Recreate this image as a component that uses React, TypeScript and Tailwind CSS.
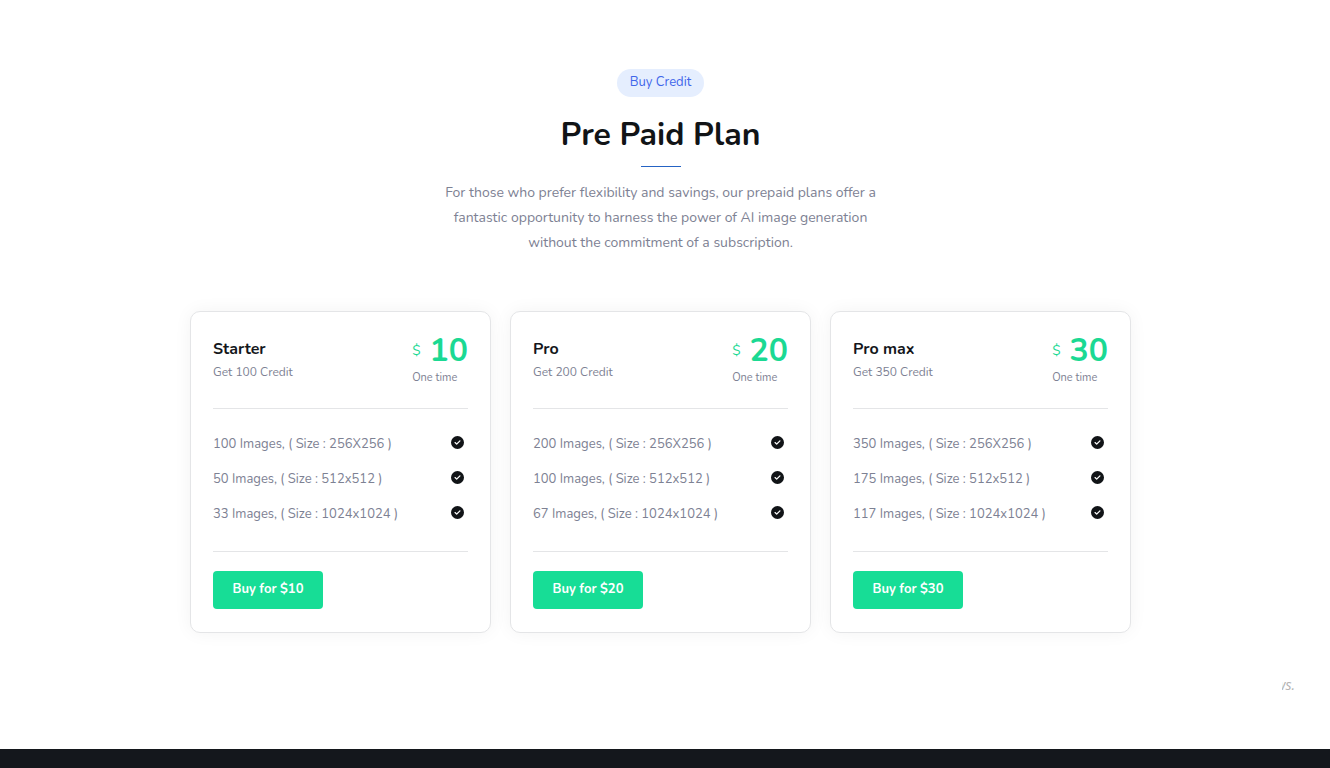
import React from "react";
import { FaCircleCheck } from "react-icons/fa6";

type Plan = {
  name: string;
  credits: number;
  price: number;
  features: string[];
};

const plans: Plan[] = [
  {
    name: "Starter",
    credits: 100,
    price: 10,
    features: [
      "100 Images, ( Size : 256X256 )",
      "50 Images, ( Size : 512x512 )",
      "33 Images, ( Size : 1024x1024 )",
    ],
  },
  {
    name: "Pro",
    credits: 200,
    price: 20,
    features: [
      "200 Images, ( Size : 256X256 )",
      "100 Images, ( Size : 512x512 )",
      "67 Images, ( Size : 1024x1024 )",
    ],
  },
  {
    name: "Pro max",
    credits: 350,
    price: 30,
    features: [
      "350 Images, ( Size : 256X256 )",
      "175 Images, ( Size : 512x512 )",
      "117 Images, ( Size : 1024x1024 )",
    ],
  },
];

function PlanCard({ plan }: { plan: Plan }) {
  return (
    <article className="rounded-[10px] border border-[#e4e5e7] bg-white px-[22px] pt-[21px] pb-[23px] shadow-[0_0_18px_rgba(0,0,0,0.05)]">
      <header className="flex items-start justify-between border-b border-[#e4e5e7] pb-[21px]">
        <div className="pt-[4px]">
          <h3 className="text-[16px] leading-[24px] font-bold text-[#14171c]">{plan.name}</h3>
          <p className="text-[12px] leading-[22px] text-[#7d8193]">Get {plan.credits} Credit</p>
        </div>
        <div>
          <p className="flex items-center gap-[9px] text-[#1bd993]">
            <span className="text-[14px] leading-[36px]">$</span>
            <span className="text-[32px] leading-[36px] font-bold">{plan.price}</span>
          </p>
          <p className="text-[11px] leading-[18px] text-[#7d8193]">One time</p>
        </div>
      </header>
      <ul className="flex flex-col gap-[15px] border-b border-[#e4e5e7] pt-[25px] pb-[27px]">
        {plan.features.map((feature) => (
          <li key={feature} className="flex items-start justify-between pr-[4px] text-[13px] leading-[20px] text-[#7d8193]">
            {feature}
            <FaCircleCheck className="mt-[2px] size-[13px] shrink-0 text-[#111417]" aria-hidden="true" />
          </li>
        ))}
      </ul>
      <button
        type="button"
        className="mt-[19px] h-[38px] w-[110px] rounded-[4px] bg-[#17dd96] text-[13px] font-bold text-white"
      >
        Buy for ${plan.price}
      </button>
    </article>
  );
}

export default function App() {
  return (
    <div className="flex min-h-screen flex-col bg-white font-['Nunito','Open_Sans',sans-serif]">
      <main className="pt-[69px] pr-[9px]">
        <section className="flex flex-col items-center px-4">
          <span className="rounded-full bg-[#e5eefe] px-[13px] pt-[3px] pb-[5px] text-[13px] leading-[20px] text-[#3f66ea]">
            Buy Credit
          </span>
          <h2 className="mt-[16px] text-[32px] leading-[44px] font-bold text-[#111417]">Pre Paid Plan</h2>
          <div className="mt-[9px] h-px w-[40px] bg-[#2563c4]" />
          <p className="mt-[13px] max-w-[460px] text-center text-[14px] leading-[25px] text-[#7d8193]">
            For those who prefer flexibility and savings, our prepaid plans offer a fantastic opportunity to harness
            the power of AI image generation without the commitment of a subscription.
          </p>
          <div className="mt-[56px] grid w-full max-w-[941px] gap-[19px] md:grid-cols-3">
            {plans.map((plan) => (
              <PlanCard key={plan.name} plan={plan} />
            ))}
          </div>
        </section>
        <div className="mt-[42px] flex justify-end pr-[26px] pb-[54px]">
          <span className="flex w-[13px] justify-end overflow-hidden font-['Open_Sans',sans-serif] text-[14px] leading-[20px] text-[#b3b3b3] italic">
            ws.
          </span>
        </div>
      </main>
      <footer className="min-h-[19px] flex-1 bg-[#14171c]" />
    </div>
  );
}
